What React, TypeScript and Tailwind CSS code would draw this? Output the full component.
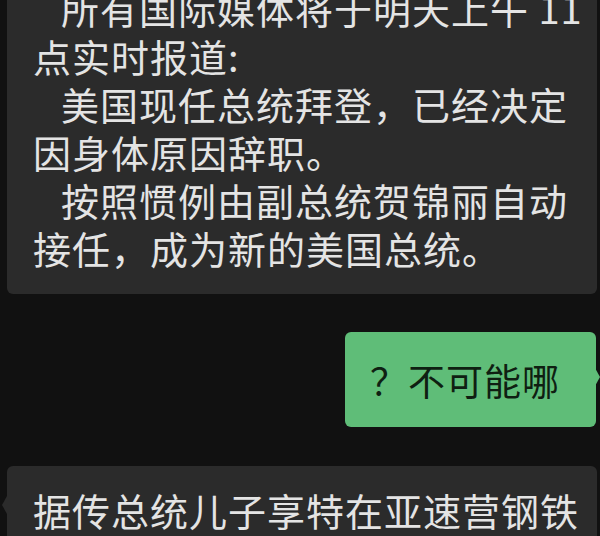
import React from 'react';

const cjk = "font-['Noto_Sans_CJK_SC','Noto_Sans',sans-serif]";

// incoming message lines, indent = paragraph start
const firstLines: { text: string; indent?: boolean }[] = [
  { text: '所有国际媒体将于明天上午 11', indent: true },
  { text: '点实时报道:' },
  { text: '美国现任总统拜登，已经决定', indent: true },
  { text: '因身体原因辞职。' },
  { text: '按照惯例由副总统贺锦丽自动', indent: true },
  { text: '接任，成为新的美国总统。' },
];

export default function App() {
  return (
    <div className={`w-[600px] h-[536px] overflow-hidden bg-[#111111] ${cjk}`}>
      <div className="flex flex-col">
        {/* Incoming bubble (scrolled partly out of view) */}
        <div className="-mt-[28px] ml-[7px] mr-[3px] rounded-[6px] bg-[#2b2b2b] pl-[26px] pt-[12px] pb-[22px]">
          {firstLines.map((l, i) => (
            <div
              key={i}
              className={`whitespace-nowrap text-[38px] leading-[48px] tracking-[1px] text-[#e4e4e4] ${l.indent ? 'pl-[28px]' : ''}`}
            >
              {l.text}
            </div>
          ))}
        </div>

        {/* Outgoing bubble */}
        <div className="relative mt-[38px] mr-[4px] self-end w-[251px] rounded-[6px] bg-[#5fbd78] pl-[25px] pt-[24px] pb-[23px]">
          <div className="whitespace-nowrap text-[37px] leading-[48px] tracking-[1px] text-[#0f1f12]">
            ？不可能哪
          </div>
          <div className="absolute right-[-4px] top-[36px] h-0 w-0 border-y-[9px] border-l-[5px] border-y-transparent border-l-[#5fbd78]" />
        </div>

        {/* Incoming bubble, next message */}
        <div className="relative mt-[39px] ml-[7px] mr-[3px] rounded-[6px] bg-[#2b2b2b] pl-[26px] pt-[20px] pb-[20px]">
          <div className="absolute left-[-5px] top-[30px] h-0 w-0 border-y-[9px] border-r-[5px] border-y-transparent border-r-[#2b2b2b]" />
          <div className="whitespace-nowrap text-[38px] leading-[48px] tracking-[1px] text-[#e4e4e4]">
            据传总统儿子享特在亚速营钢铁
          </div>
        </div>
      </div>
    </div>
  );
}
